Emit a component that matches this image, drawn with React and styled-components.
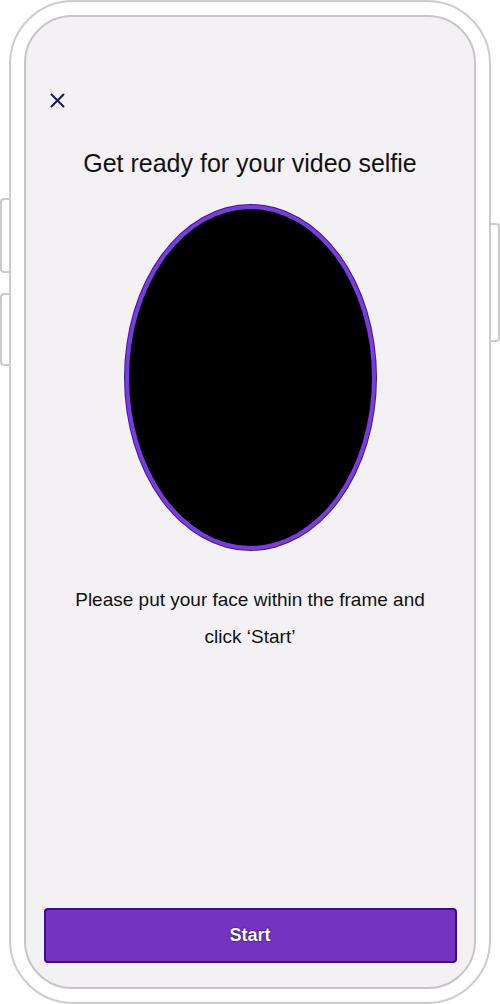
import React from 'react';
import styled, { createGlobalStyle } from 'styled-components';

const GlobalStyle = createGlobalStyle`
  html, body {
    margin: 0;
    padding: 0;
    background: #ffffff;
  }
  body {
    font-family: "Liberation Sans", Arial, sans-serif;
  }
`;

const StyledPage = styled.div`
  width: 500px;
  height: 1004px;
  position: relative;
  display: flex;
  justify-content: center;
  overflow: hidden;
`;

const StyledSideButton = styled.div`
  position: absolute;
  ${(props) => (props.right ? 'right: 0;' : 'left: 0;')}
  top: ${(props) => props.top}px;
  width: 10px;
  height: ${(props) => props.length}px;
  border: 2px solid #cbcbcb;
  ${(props) => (props.right ? 'border-left: none;' : 'border-right: none;')}
  border-radius: ${(props) => (props.right ? '0 4px 4px 0' : '4px 0 0 4px')};
  background: #ffffff;
  box-sizing: border-box;
`;

const StyledPhone = styled.div`
  width: 482px;
  height: 1004px;
  box-sizing: border-box;
  border: 2px solid #cdcdcd;
  border-radius: 64px;
  background: #ffffff;
  padding: 13px;
  position: relative;
  z-index: 1;
`;

const StyledScreen = styled.div`
  height: 100%;
  box-sizing: border-box;
  border: 2px solid #c6c6c6;
  border-radius: 48px;
  background: #f3f1f4;
  display: flex;
  flex-direction: column;
  align-items: center;
  padding: 74px 18px 24px;
`;

const StyledTopBar = styled.div`
  width: 100%;
  display: flex;
  padding-left: 4px;
  box-sizing: border-box;
`;

const StyledClose = styled.button`
  border: none;
  background: none;
  padding: 0;
  width: 18px;
  height: 18px;
  display: flex;
  align-items: center;
  justify-content: center;
  color: #1b1660;
`;

const StyledTitle = styled.h1`
  margin: 40px 0 0;
  font-size: 25px;
  font-weight: 400;
  color: #111111;
`;

const StyledFrame = styled.div`
  margin-top: 27px;
  width: 251px;
  height: 345px;
  box-sizing: border-box;
  border-radius: 50%;
  background: #000000;
  border: 4px solid #7a3be0;
  box-shadow: 0 0 0 1px #3b1a8c;
`;

const StyledHint = styled.p`
  margin: 31px 0 0;
  font-size: 19px;
  line-height: 37px;
  text-align: center;
  color: #111111;
  max-width: 400px;
`;

const StyledSpacer = styled.div`
  flex: 1;
`;

const StyledStartButton = styled.button`
  width: 413px;
  height: 55px;
  border: 2px solid #3c0d96;
  border-radius: 4px;
  background: #7533c2;
  color: #ffffff;
  font-family: "Liberation Sans", Arial, sans-serif;
  font-weight: 700;
  font-size: 18px;
  text-shadow: 0 0 2px #2a0870, 0 0 1px #2a0870;
`;

const App = () => (
  <>
    <GlobalStyle />
    <StyledPage>
      <StyledSideButton top={198} length={75} />
      <StyledSideButton top={293} length={73} />
      <StyledSideButton right top={223} length={119} />
      <StyledPhone>
        <StyledScreen>
          <StyledTopBar>
            <StyledClose aria-label="Close">
              <svg width="15" height="15" viewBox="0 0 15 15">
                <path d="M1.5 1.5 L13.5 13.5 M13.5 1.5 L1.5 13.5" stroke="currentColor" strokeWidth="2" strokeLinecap="round" />
              </svg>
            </StyledClose>
          </StyledTopBar>
          <StyledTitle>Get ready for your video selfie</StyledTitle>
          <StyledFrame />
          <StyledHint>
            Please put your face within the frame and
            <br />
            click ‘Start’
          </StyledHint>
          <StyledSpacer />
          <StyledStartButton>Start</StyledStartButton>
        </StyledScreen>
      </StyledPhone>
    </StyledPage>
  </>
);

export default App;
